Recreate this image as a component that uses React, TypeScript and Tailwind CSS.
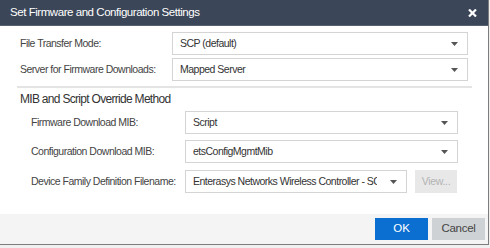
import React from "react";

const font = "font-['Liberation_Sans',Arial,sans-serif]";

function Caret() {
  return (
    <svg width="7" height="4" viewBox="0 0 7 4" className="shrink-0">
      <path d="M0 0 L7 0 L3.5 4 Z" fill="#555" />
    </svg>
  );
}

function Select({ value, width }: { value: string; width: string }) {
  return (
    <div
      className={`${width} h-[23px] border border-[#d4d4d4] bg-white flex items-center pl-[7px] pr-[9px]`}
    >
      <span className="flex-1 overflow-hidden whitespace-nowrap text-[10.5px] tracking-[-0.5px] text-[#333] mr-[13px]">
        {value}
      </span>
      <Caret />
    </div>
  );
}

function Row({
  label,
  labelW,
  children,
  className = "",
}: {
  label: string;
  labelW: string;
  children: React.ReactNode;
  className?: string;
}) {
  return (
    <div className={`flex items-center ${className}`}>
      <span className={`${labelW} shrink-0 whitespace-nowrap text-[10.5px] tracking-[-0.5px] text-[#444]`}>{label}</span>
      {children}
    </div>
  );
}

export default function App() {
  return (
    <div className={`w-[490px] h-[248px] bg-[#f0f0f0] ${font}`}>
      <div className="w-[489px] h-[245px] flex flex-col bg-white border-r border-b border-[#7d7d7d]">
        {/* title bar */}
        <div className="h-[26px] shrink-0 bg-[#3b4658] border-b border-[#56606f] flex items-center justify-between pl-[10px] pr-[11px]">
          <span className="text-[11.5px] tracking-[-0.45px] text-white">Set Firmware and Configuration Settings</span>
          <svg width="9" height="8" viewBox="0 0 9 8">
            <path d="M1 0.5 L8 7.5 M8 0.5 L1 7.5" stroke="#fff" strokeWidth="2.2" />
          </svg>
        </div>

        <div className="flex-1 flex flex-col pt-[6px]">
          <Row label="File Transfer Mode:" labelW="w-[152px] pl-[20px] box-content">
            <Select value="SCP (default)" width="w-[296px]" />
          </Row>
          <Row label="Server for Firmware Downloads:" labelW="w-[152px] pl-[20px] box-content" className="mt-[3px]">
            <Select value="Mapped Server" width="w-[296px]" />
          </Row>

          <div className="ml-[17px] w-[455px] h-[2px] bg-[#e4e4e4] mt-[5px]" />

          <div className="pl-[20px] mt-[3px] text-[12px] tracking-[-0.7px] leading-[16px] text-[#333]">
            MIB and Script Override Method
          </div>

          <Row label="Firmware Download MIB:" labelW="w-[154px] pl-[31px] box-content" className="mt-[4px]">
            <Select value="Script" width="w-[273px]" />
          </Row>
          <Row label="Configuration Download MIB:" labelW="w-[154px] pl-[31px] box-content" className="mt-[6px]">
            <Select value="etsConfigMgmtMib" width="w-[273px]" />
          </Row>
          <Row label="Device Family Definition Filename:" labelW="w-[154px] pl-[31px] box-content" className="mt-[7px]">
            <Select value="Enterasys Networks Wireless Controller - SCP" width="w-[222px]" />
            <div className="ml-[8px] w-[42px] h-[23px] bg-[#e8e8e8] flex items-center justify-center text-[10.5px] tracking-[-0.3px] text-[#b3b3b3]">
              View...
            </div>
          </Row>
        </div>

        {/* footer */}
        <div className="h-[30px] shrink-0 bg-[#f4f4f4] flex items-center justify-end gap-[4px] pr-[3px]">
          <div className="w-[53px] h-[22px] bg-[#0b6fd2] text-white text-[11.5px] flex items-center justify-center">
            OK
          </div>
          <div className="w-[53px] h-[22px] bg-[#cfd2d5] text-[#444] text-[11.5px] tracking-[-0.3px] flex items-center justify-center">
            Cancel
          </div>
        </div>
      </div>
    </div>
  );
}
